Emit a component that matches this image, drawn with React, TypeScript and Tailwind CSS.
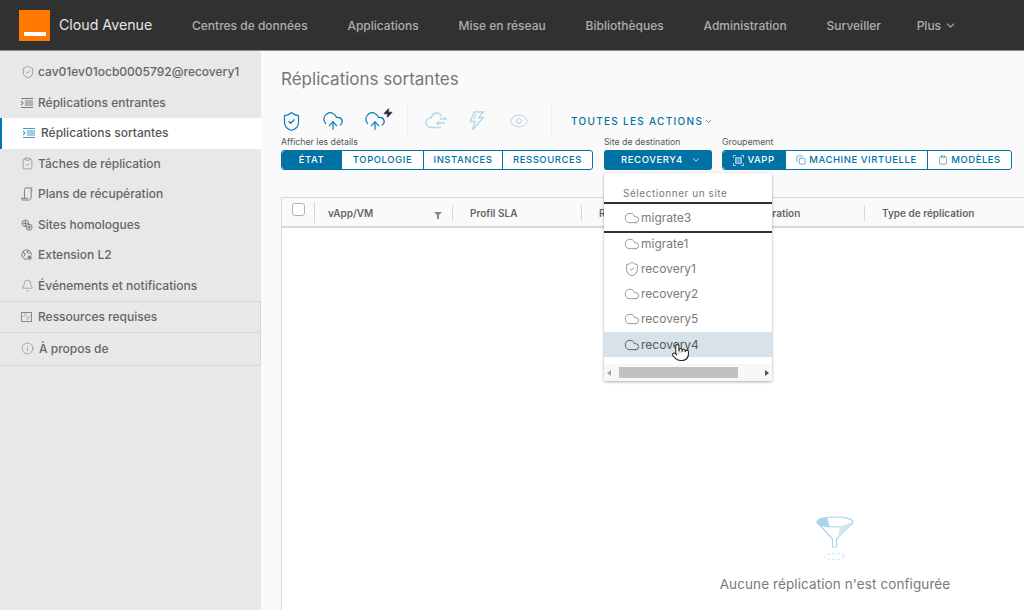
import React from "react";
import { Cloud, ShieldCheck, ChevronDown, Bell, Info, Eye, Zap, CloudUpload, ClipboardCheck, Activity, Clipboard, Copy, Pointer } from "lucide-react";

function Lines({ color }: { color: string }) {
  return (
    <svg width="12" height="10" viewBox="0 0 12 10" fill="none" stroke={color} strokeWidth="1.1">
      <path d="M0 .500h12M4 3h8M4 5h8M4 7h8M0 9.500h12M0 3l2 2-2 2" />
    </svg>
  );
}
function Plans() {
  return (
    <svg width="12" height="14" viewBox="0 0 14 16" fill="none" stroke="#6e6e6e" strokeWidth="1">
      <path d="M4 2.500C4 1.500 5 1 6 1h7c-1 .5-1.200 1.500-1.200 2.500V12c0 1.500-1 3-2.500 3H2c-1 0-1.500-.8-1.500-2H8" />
      <path d="M4 2.500V13M12 4h1.500" />
    </svg>
  );
}
function Sites() {
  return (
    <svg width="12" height="12" viewBox="0 0 14 14" fill="none" stroke="#6e6e6e" strokeWidth="1">
      <circle cx="5" cy="5" r="3.800" />
      <circle cx="9.500" cy="9.500" r="3.500" fill="#e8e8e8" />
      <path d="M7 9.500h5M9.500 6.500v6M2 5h6M5 1.500v7" />
    </svg>
  );
}
function Ext() {
  return (
    <svg width="12" height="12" viewBox="0 0 14 14" fill="none" stroke="#6e6e6e" strokeWidth="1.100">
      <circle cx="6.500" cy="6.500" r="5.500" />
      <path d="M2 3.500l3 2-1.500 3M8 1.500L7 4l3 1" />
      <circle cx="10" cy="10" r="3" fill="#888" stroke="#e8e8e8" />
    </svg>
  );
}
function CloudSwap() {
  return (
    <svg width="22" height="18" viewBox="0 0 22 18" fill="none" stroke="#b5d6e6" strokeWidth="1.300">
      <path d="M16.500 4.500C15.500 2 13.500 1 11.500 1 9 1 7 3 6.500 5.500 3.500 5.500 1 7.500 1 10.500 1 13.500 3.500 15.500 6 15.500h10" />
      <path d="M15 7h6l-2-2M20 11h-8l2-2M12 11l2 2" />
    </svg>
  );
}
function BoltOutline() {
  return (
    <svg width="16" height="20" viewBox="0 0 16 20" fill="none" stroke="#b5d6e6" strokeWidth="1.300">
      <path d="M10 1H5L1.500 10.500H6L3.500 19 14.500 6.500H9.500L14.500 1H10" />
      <path d="M7 3l-2 5" />
    </svg>
  );
}
function Funnel() {
  return (
    <svg width="38" height="46" viewBox="0 0 38 46" fill="none">
      <path d="M1 6C1 3 9 1 19 1s18 2 18 5-8 5-18 5S1 9 1 6z" fill="#fff" stroke="#a9d4ec" strokeWidth="1.200" />
      <path d="M1 6c0-2.500 5-4 10-4.500l3 9.500C7 10 1 8.500 1 6z" fill="#a9d4ec" />
      <path d="M1 6l15.500 17v8h4v-8L37 6" stroke="#a9d4ec" strokeWidth="1.200" />
      <path d="M24 10.500L37 6 22 22z" fill="#cfe7f4" />
      <ellipse cx="18.500" cy="40.500" rx="10" ry="3" stroke="#c5e2f1" strokeWidth="1" strokeDasharray="3 2" />
    </svg>
  );
}
function VappIcon() {
  return (
    <svg width="11" height="11" viewBox="0 0 12 12" fill="none" stroke="#cfe3ec" strokeWidth="1">
      <path d="M.5 3V.500H3M9 .500h2.500V3M11.500 9v2.500H9M3 11.500H.500V9" />
      <rect x="3" y="3" width="6" height="6" fill="#cfe3ec" fillOpacity=".4" />
    </svg>
  );
}

const nav = ["Centres de données", "Applications", "Mise en réseau", "Bibliothèques", "Administration", "Surveiller"];

function Side({ icon, label, active }: { icon: React.ReactNode; label: string; active?: boolean }) {
  return (
    <div className={active ? "flex h-[31px] items-center border-l-[2px] border-[#0079b8] bg-white pl-[21px] text-[#565656]" : "flex h-[30.400px] items-center pl-[21px] text-[#666666]"}>
      <span className={active ? "flex w-[18px] justify-start" : "flex w-[17px] justify-start"}>{icon}</span>
      <span>{label}</span>
    </div>
  );
}

function Seg({ label, on, icon, w, first, last }: { label: string; on?: boolean; icon?: React.ReactNode; w: string; first?: boolean; last?: boolean }) {
  return (
    <div className={`${w} ${on ? "bg-[#0072a3] text-white" : "bg-white text-[#0072a3]"} ${first ? "rounded-l-[3px]" : "border-l border-[#0072a3]"} ${last ? "rounded-r-[3px]" : ""} flex h-full items-center justify-center gap-[3px] text-[9.500px] font-medium tracking-[0.55px]`}>
      {icon}
      <span>{label}</span>
    </div>
  );
}

function Row({ label, shield, hover, h = "h-[25.300px]" }: { label: string; shield?: boolean; hover?: boolean; h?: string }) {
  return (
    <div className={`flex ${h} items-center gap-[1px] pl-[20px] text-[12px] ${hover ? "bg-[#d8e3e9] text-[#565656]" : "text-[#7a7a7a]"}`}>
      {shield ? <ShieldCheck size={16} strokeWidth={1.200} color="#777" /> : <Cloud size={16} strokeWidth={1.200} color={hover ? "#444" : "#808080"} />}
      <span>{label}</span>
    </div>
  );
}

function Col({ label, w }: { label: string; w: string }) {
  return (
    <div className={`${w} flex h-[16px] shrink-0 items-center border-r border-[#d7d7d7] pl-[17px] text-[10px] font-semibold text-[#666666]`}>{label}</div>
  );
}

export default function App() {
  return (
    <div className="relative flex h-[610px] w-[1024px] flex-col overflow-hidden bg-[#fafafa] font-[family-name:Inter,sans-serif]">
      <header className="flex h-[51px] shrink-0 items-center border-b border-[#8c8c8c] bg-[#313131]">
        <div className="ml-[19px] flex h-[31px] w-[31px] items-end justify-center bg-[#ff7900] pb-[5px]">
          <div className="h-[4px] w-[22px] bg-white" />
        </div>
        <div className="ml-[9px] w-[133px] text-[14.200px] text-[#e6e6e6]">Cloud Avenue</div>
        <nav className="flex items-center gap-[39.800px] pt-px text-[12px] font-medium text-[#adadad]">
          {nav.map((n) => (
            <span key={n}>{n}</span>
          ))}
          <span className="-ml-[4px] flex items-center gap-[3px]">
            Plus <ChevronDown size={13} />
          </span>
        </nav>
      </header>

      <div className="flex min-h-0 flex-1">
        <aside className="w-[261px] shrink-0 bg-[#e8e8e8] pt-[6px] text-[12px] font-medium">
          <Side icon={<ShieldCheck size={14} strokeWidth={1} color="#6e6e6e" />} label="cav01ev01ocb0005792@recovery1" />
          <Side icon={<Lines color="#7d7d7d" />} label="Réplications entrantes" />
          <Side active icon={<Lines color="#4a9bc4" />} label="Réplications sortantes" />
          <Side icon={<ClipboardCheck size={13} strokeWidth={1} color="#6e6e6e" />} label="Tâches de réplication" />
          <Side icon={<Plans />} label="Plans de récupération" />
          <Side icon={<Sites />} label="Sites homologues" />
          <Side icon={<Ext />} label="Extension L2" />
          <Side icon={<Bell size={13} strokeWidth={1} color="#6e6e6e" />} label="Événements et notifications" />
          <div className="flex h-[32px] items-center gap-[6px] border-y border-r border-[#d7d7d7] pl-[21px] text-[#666666]">
            <span className="flex h-[10px] w-[11px] items-center justify-center border border-[#8a8a8a]"><Activity size={9} strokeWidth={1} color="#777" /></span>
            <span>Ressources requises</span>
          </div>
          <div className="flex h-[33px] items-center gap-[5px] border-b border-r border-[#d7d7d7] pl-[21px] text-[#666666]">
            <Info size={13} strokeWidth={1} color="#6e6e6e" />
            <span>À propos de</span>
          </div>
        </aside>

        <main className="min-w-0 flex-1 pl-[20px]">
          <h1 className="mt-[17px] h-[22px] text-[17px] leading-[22px] text-[#777777]">Réplications sortantes</h1>
          <div className="mt-[16px] flex h-[30px] items-center">
            <ShieldCheck size={21} strokeWidth={1.300} color="#0079b8" />
            <CloudUpload size={22} strokeWidth={1.300} color="#0079b8" className="ml-[20px]" />
            <span className="relative ml-[20px] flex">
              <CloudUpload size={22} strokeWidth={1.300} color="#0079b8" />
              <Zap size={10} fill="#2f2238" color="#2f2238" className="absolute -right-[7px] -top-[2px]" />
            </span>
            <div className="ml-[21px] h-[30px] w-px bg-[#eeeeee]" />
            <span className="ml-[17px] flex"><CloudSwap /></span>
            <span className="ml-[22px] flex"><BoltOutline /></span>
            <Eye size={20} strokeWidth={1.200} color="#b5d6e6" className="ml-[24px]" />
            <div className="ml-[22px] h-[30px] w-px bg-[#eeeeee]" />
            <span className="ml-[19px] flex items-center gap-[1px] text-[10px] font-medium tracking-[1.300px] text-[#0072a3]">
              TOUTES LES ACTIONS <ChevronDown size={9} strokeWidth={2} />
            </span>
          </div>

          <div className="-mt-px flex">
            <div className="w-[323px]">
              <div className="h-[15px] text-[8.750px] leading-[15px] text-[#565656]">Afficher les détails</div>
              <div className="flex h-[20px] w-[312px] overflow-hidden rounded-[3px] border border-[#0072a3]">
                <Seg first on label="ÉTAT" w="w-[59px]" />
                <Seg label="TOPOLOGIE" w="w-[82px]" />
                <Seg label="INSTANCES" w="w-[79px]" />
                <Seg last label="RESSOURCES" w="flex-1" />
              </div>
            </div>
            <div className="w-[118px]">
              <div className="h-[15px] text-[8.750px] leading-[15px] text-[#565656]">Site de destination</div>
              <div className="flex h-[20px] w-[108px] items-center gap-[8px] rounded-[3px] bg-[#0072a3] pl-[17px] text-[9.500px] font-medium tracking-[0.6px] text-white">
                RECOVERY4 <ChevronDown size={10} />
              </div>
            </div>
            <div>
              <div className="h-[15px] text-[8.750px] leading-[15px] text-[#565656]">Groupement</div>
              <div className="flex h-[20px] w-[290px] overflow-hidden rounded-[3px] border border-[#0072a3]">
                <Seg first on label="VAPP" w="w-[62px]" icon={<VappIcon />} />
                <Seg label="MACHINE VIRTUELLE" w="w-[142px]" icon={<Copy size={10} strokeWidth={1.300} />} />
                <Seg last label="MODÈLES" w="flex-1" icon={<Clipboard size={10} strokeWidth={1.300} />} />
              </div>
            </div>
          </div>

          <section className="mt-[27px] h-[500px] border-l border-t border-[#d7d7d7] bg-white">
            <div className="flex h-[30px] w-[800px] items-center border-b-2 border-[#d7d7d7] bg-[#fafafa] pt-[2px]">
              <div className="-mt-[2px] flex h-[21px] w-[33px] shrink-0 items-start border-r border-[#d7d7d7] pl-[10px]">
                <div className="mt-[1px] h-[13px] w-[13px] rounded-[3px] border border-[#b3b3b3] bg-white" />
              </div>
              <div className="relative flex h-[16px] w-[138px] shrink-0 items-center border-r border-[#d7d7d7] pl-[13px] text-[10px] font-semibold text-[#666666]">
                vApp/VM
                <svg width="8" height="8" viewBox="0 0 8 8" className="absolute right-[10px] top-[6px]"><path d="M0 1h8L5 4v4H3V4z" fill="#8a8a8a" /></svg>
              </div>
              <Col label="Profil SLA" w="w-[129px]" />
              <Col label="RPO" w="w-[109px]" />
              <div className="flex h-[16px] w-[174px] shrink-0 items-center border-r border-[#d7d7d7] pl-[19px] text-[10px] font-semibold text-[#666666]">Dernière opération</div>
              <div className="pl-[17px] text-[10px] font-semibold text-[#666666]">Type de réplication</div>
            </div>
            <div className="ml-[437px] mt-[288px] flex w-[232px] flex-col items-center">
              <Funnel />
              <div className="mt-[12px] whitespace-nowrap text-[13.500px] tracking-[0.1px] text-[#7a7a7a]">Aucune réplication n'est configurée</div>
            </div>
          </section>
        </main>
      </div>

      {/* open dropdown */}
      <div className="absolute left-[604px] top-[173px] w-[168px] rounded-[2px] bg-white shadow-[0_1px_3px_rgba(0,0,0,0.35)]">
        <div className="h-[29px] pl-[19px] pt-[14px] text-[10px] leading-[13px] tracking-[0.55px] text-[#7a7a7a]">Sélectionner un site</div>
        <div className="h-[2px] bg-[#313131]" />
        <Row label="migrate3" h="h-[27px]" />
        <div className="h-[2px] bg-[#313131]" />
        <Row label="migrate1" h="h-[21px]" />
        <div className="h-[2px]" />
        <Row shield label="recovery1" />
        <Row label="recovery2" />
        <Row label="recovery5" />
        <Row hover label="recovery4" />
        <div className="h-[7px]" />
        <div className="flex h-[17px] items-center justify-between bg-[#f7f7f7] px-[3px]">
          <span className="h-0 w-0 border-y-[3px] border-r-[4px] border-y-transparent border-r-[#a3a3a3]" />
          <div className="ml-[8px] h-[11px] w-[119px] bg-[#c1c1c1]" />
          <span className="ml-auto h-0 w-0 border-y-[3px] border-l-[4px] border-y-transparent border-l-[#505050]" />
        </div>
      </div>
      <Pointer size={19} strokeWidth={1.300} color="#222" fill="#fff" className="absolute left-[671px] top-[343px]" />
    </div>
  );
}
